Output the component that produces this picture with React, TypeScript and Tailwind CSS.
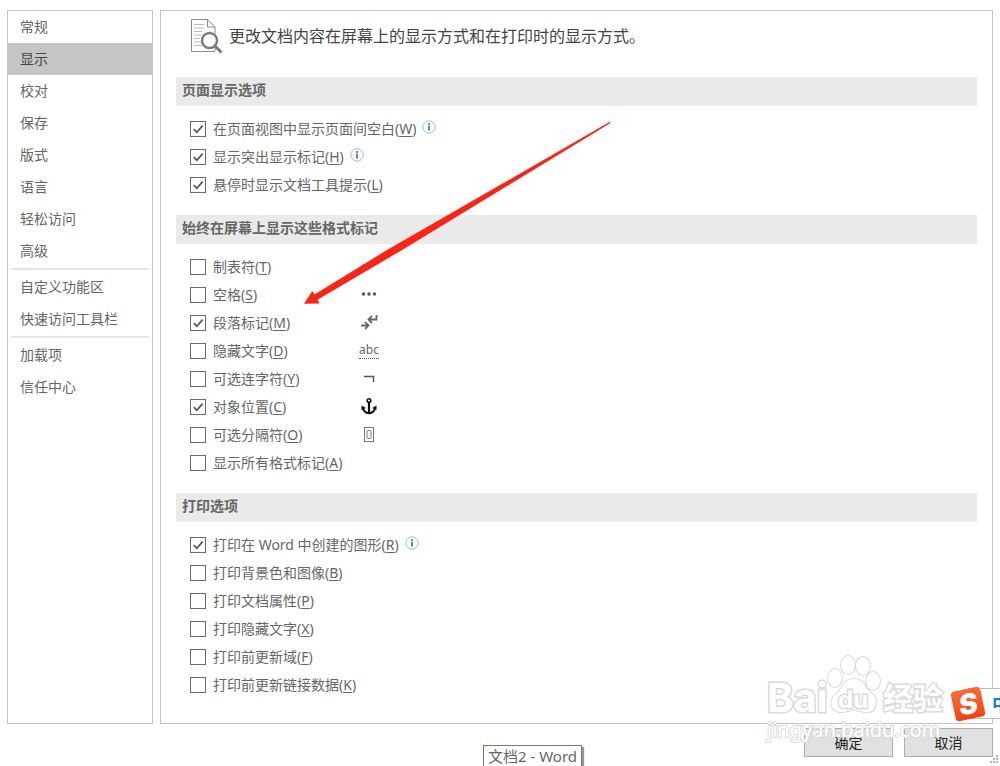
import { useState } from 'react'
import type { ReactNode } from 'react'

interface Option {
  id: string
  label: string
  accel: string
  checked?: boolean
  info?: boolean
  mark?: ReactNode
}

const NAV_GROUPS = [
  ['常规', '显示', '校对', '保存', '版式', '语言', '轻松访问', '高级'],
  ['自定义功能区', '快速访问工具栏'],
  ['加载项', '信任中心'],
]

const PAGE_OPTIONS: Option[] = [
  { id: 'whitespace', label: '在页面视图中显示页面间空白', accel: 'W', checked: true, info: true },
  { id: 'highlight', label: '显示突出显示标记', accel: 'H', checked: true, info: true },
  { id: 'tooltips', label: '悬停时显示文档工具提示', accel: 'L', checked: true },
]

const MARK_OPTIONS: Option[] = [
  { id: 'tabs', label: '制表符', accel: 'T', mark: <TabMark /> },
  { id: 'spaces', label: '空格', accel: 'S', mark: <SpaceMark /> },
  { id: 'paragraph', label: '段落标记', accel: 'M', checked: true, mark: <ParagraphMark /> },
  { id: 'hidden', label: '隐藏文字', accel: 'D', mark: <HiddenMark /> },
  { id: 'hyphens', label: '可选连字符', accel: 'Y', mark: <HyphenMark /> },
  { id: 'anchors', label: '对象位置', accel: 'C', checked: true, mark: <AnchorMark /> },
  { id: 'breaks', label: '可选分隔符', accel: 'O', mark: <BreakMark /> },
  { id: 'all', label: '显示所有格式标记', accel: 'A' },
]

const PRINT_OPTIONS: Option[] = [
  { id: 'drawings', label: '打印在 Word 中创建的图形', accel: 'R', checked: true, info: true },
  { id: 'background', label: '打印背景色和图像', accel: 'B' },
  { id: 'properties', label: '打印文档属性', accel: 'P' },
  { id: 'print-hidden', label: '打印隐藏文字', accel: 'X' },
  { id: 'fields', label: '打印前更新域', accel: 'F' },
  { id: 'linked', label: '打印前更新链接数据', accel: 'K' },
]

export default function App() {
  const [active, setActive] = useState('显示')

  return (
    <div className="relative flex min-h-screen flex-col overflow-hidden bg-white px-[7px] pt-[10px] pb-[9px] font-['Noto_Sans','Noto_Sans_CJK_SC',sans-serif] text-sm text-[#666]">
      <div className="flex flex-1 gap-[7px]">
        <Sidebar active={active} onSelect={setActive} />

        <main className="relative flex-1 border border-[#c3c3c3] px-[15px]">
          <header className="flex h-[66px] items-center gap-[6px] pb-4 pl-[14px]">
            <DocumentSearchIcon />
            <h1 className="text-base text-[#444]">更改文档内容在屏幕上的显示方式和在打印时的显示方式。</h1>
          </header>

          <Section title="页面显示选项" options={PAGE_OPTIONS} />
          <Section title="始终在屏幕上显示这些格式标记" options={MARK_OPTIONS} />
          <Section title="打印选项" options={PRINT_OPTIONS} />

          <PointerArrow />
        </main>
      </div>

      <footer className="mt-1 flex justify-end gap-[11px]">
        <DialogButton>确定</DialogButton>
        <DialogButton>取消</DialogButton>
      </footer>

      <Watermark />
      <InputMethodBar />
      <ResizeGrip />

      <div
        role="tooltip"
        className="absolute bottom-0 left-[483px] h-[21px] border border-b-0 border-[#777] bg-white px-1 text-[15px] leading-5 whitespace-nowrap shadow-[2px_2px_1px_#999]"
      >
        文档2 - Word
      </div>
    </div>
  )
}

function Sidebar({ active, onSelect }: { active: string; onSelect: (name: string) => void }) {
  return (
    <nav className="w-[146px] shrink-0 border border-[#c3c3c3]">
      {NAV_GROUPS.map((group, i) => (
        <div key={group[0]}>
          {i > 0 && <hr className="mx-[3px] my-px border-t-2 border-[#e6e6e6]" />}
          {group.map(name => (
            <button
              key={name}
              onClick={() => onSelect(name)}
              className={`block h-8 w-full px-3 text-left ${
                name === active ? 'bg-[#c5c5c5] text-[#444]' : 'hover:bg-[#e6e6e6]'
              }`}
            >
              {name}
            </button>
          ))}
        </div>
      ))}
    </nav>
  )
}

function Section({ title, options }: { title: string; options: Option[] }) {
  return (
    <section>
      <h2 className="h-[29px] bg-[#eaeaea] px-[6px] leading-[25px] font-bold">{title}</h2>
      <ul className="pt-[9px] pb-4 pl-[14px]">
        {options.map(option => (
          <OptionRow key={option.id} option={option} />
        ))}
      </ul>
    </section>
  )
}

function OptionRow({ option }: { option: Option }) {
  const { id, label, accel, checked, info, mark } = option
  return (
    <li className="flex h-7 items-center">
      <div className="flex min-w-[169px] items-center">
        <span className="relative flex size-4 shrink-0">
          <input
            id={id}
            type="checkbox"
            defaultChecked={checked}
            className="peer size-4 appearance-none border border-[#6a6a6a] bg-white"
          />
          <svg
            viewBox="0 0 16 16"
            className="pointer-events-none absolute inset-0 hidden size-4 peer-checked:block"
            fill="none"
            stroke="#555"
            strokeWidth="1.7"
          >
            <path d="M3.8 8.2 6.8 11.2 12.6 4.6" />
          </svg>
        </span>
        <label htmlFor={id} className="pl-[7px] whitespace-nowrap">
          {label}(<u className="underline-offset-2">{accel}</u>)
        </label>
        {info && <InfoIcon />}
      </div>
      {mark}
    </li>
  )
}

function DialogButton({ children }: { children: ReactNode }) {
  return (
    <button className="h-[29px] w-[89px] border border-[#adadad] bg-[#e1e1e1] text-[#222] hover:bg-[#e5f1fb]">
      {children}
    </button>
  )
}

function InfoIcon() {
  return (
    <svg width="14" height="14" viewBox="0 0 14 14" className="mb-1 ml-[6px] shrink-0" fill="none">
      <circle cx="7" cy="7" r="6.2" stroke="#9db9dd" />
      <circle cx="7" cy="4" r="1" fill="#3468a8" />
      <path d="M7 5.8V10.4" stroke="#3468a8" strokeWidth="1.6" />
    </svg>
  )
}

function DocumentSearchIcon() {
  return (
    <svg width="33" height="36" viewBox="0 0 33 36" fill="none" className="shrink-0">
      <path d="M1.5 1.5H17.5L25 9V33.5H1.5Z" fill="#fff" stroke="#8a8a8a" />
      <path d="M17.5 1.5V9H25" stroke="#8a8a8a" />
      <path d="M4 6.5H14M4 10H14M4 13.5H12M4 17H11M4 20.5H10M4 24H11M4 27.5H13" stroke="#b9b9b9" />
      <circle cx="19.5" cy="22.5" r="9" fill="#fff" />
      <circle cx="19.5" cy="22.5" r="7.5" fill="#fff" stroke="#7c7c7c" strokeWidth="2.4" />
      <path d="M25 28 31.5 34.5" stroke="#7c7c7c" strokeWidth="3" />
    </svg>
  )
}

function TabMark() {
  return (
    <svg width="20" height="16" viewBox="0 0 20 16" fill="none" stroke="#666" strokeWidth="1.5">
      <path d="M4 6H13M10 3 13 6 10 9" />
    </svg>
  )
}

function SpaceMark() {
  return (
    <svg width="20" height="16" viewBox="0 0 20 16" fill="#555">
      <circle cx="4.5" cy="7" r="1.7" />
      <circle cx="10" cy="7" r="1.7" />
      <circle cx="15.5" cy="7" r="1.7" />
    </svg>
  )
}

function ParagraphMark() {
  return (
    <svg width="20" height="18" viewBox="0 0 20 18" fill="none" stroke="#666" strokeWidth="1.8">
      <path d="M17.5 1V5.5H10M13 2 9.5 5.5 13 9" />
      <path d="M2 11.5H9M6 8 9.5 11.5 6 15" />
    </svg>
  )
}

function HiddenMark() {
  return (
    <span className="h-[15px] w-5 border-b border-dotted border-[#555] text-center text-xs leading-3">
      abc
    </span>
  )
}

function HyphenMark() {
  return (
    <svg width="20" height="16" viewBox="0 0 20 16" fill="none" stroke="#555" strokeWidth="1.5">
      <path d="M5 5.5H14.5V11" />
    </svg>
  )
}

function AnchorMark() {
  return (
    <svg width="20" height="20" viewBox="0 0 20 20" fill="none" stroke="#111">
      <circle cx="10" cy="3.5" r="1.8" strokeWidth="1.6" />
      <path d="M10 5.5V16" strokeWidth="2.2" />
      <path d="M3.8 10.5C4.3 14 7 16 10 16.3 13 16 15.7 14 16.2 10.5" strokeWidth="2" />
      <path d="M2.5 13V8.5L7 11ZM17.5 13V8.5L13 11Z" fill="#111" stroke="none" />
    </svg>
  )
}

function BreakMark() {
  return (
    <svg width="20" height="18" viewBox="0 0 20 18" fill="none" stroke="#777">
      <rect x="5.5" y="1.5" width="9" height="14" />
      <rect x="8" y="4.5" width="4" height="8" rx="1" />
    </svg>
  )
}

function PointerArrow() {
  return (
    <svg
      width="308"
      height="184"
      viewBox="303 121 308 184"
      className="pointer-events-none absolute top-[110px] left-[142px]"
    >
      <path
        d="M304 303.8 312.3 291 314.5 294.5 387 250 609.5 122 610.5 123 400 251.2 317.5 299.8 319.5 303.6Z"
        fill="#fb2416"
      />
    </svg>
  )
}

// The letters keep a white face with a soft grey rim
function Watermark() {
  return (
    <div
      aria-hidden="true"
      className="pointer-events-none absolute right-[57px] bottom-6 w-[176px] text-white [-webkit-text-stroke:3px_#dadada] [paint-order:stroke_fill]"
    >
      <div className="relative flex h-[60px] items-end justify-between font-['Inter','Noto_Sans_CJK_SC',sans-serif] leading-[40px] font-bold">
        <span className="text-[40px]">Bai</span>
        <svg
          width="56"
          height="60"
          viewBox="0 0 56 60"
          fill="#fff"
          stroke="#dadada"
          strokeWidth="2"
          className="absolute -top-1 left-[59px]"
        >
          <ellipse cx="9" cy="24" rx="7" ry="9" />
          <ellipse cx="22" cy="11" rx="7" ry="9" />
          <ellipse cx="37" cy="12" rx="7" ry="9" />
          <ellipse cx="47" cy="27" rx="7" ry="9" />
          <path d="M28 25C39 25 38 34 46 40 54 47 50 58 41 58 35 58 33 56 28 56 23 56 20 58 15 58 5 58 2 47 10 40 18 34 17 25 28 25Z" />
        </svg>
        <span className="absolute bottom-0 left-[71px] text-2xl leading-[36px]">du</span>
        <span className="text-[30px]">经验</span>
      </div>
      <div className="text-xl leading-6 [-webkit-text-stroke:2px_#dadada]">jingyan.baidu.com</div>
    </div>
  )
}

function InputMethodBar() {
  return (
    <div className="absolute right-0 bottom-[46px] flex h-[33px] w-[47px] items-center">
      <div className="absolute right-0 h-[31px] w-8 border-y border-[#bdbdbd] bg-white" />
      <div className="relative flex size-[30px] shrink-0 -rotate-12 items-center justify-center rounded bg-linear-to-b from-[#ff6a35] to-[#ef4310] font-['Inter',sans-serif] text-[28px] leading-[30px] font-black text-white italic">
        S
      </div>
      <span className="relative pl-[9px] text-lg font-bold whitespace-nowrap text-[#1e78d0]">中</span>
    </div>
  )
}

function ResizeGrip() {
  return (
    <svg width="10" height="10" viewBox="0 0 10 10" fill="#b5b5b5" className="absolute right-px bottom-px">
      <path d="M7 0h2v2h-2zM7 3h2v2h-2zM7 6h2v2h-2zM4 3h2v2h-2zM4 6h2v2h-2zM1 6h2v2h-2z" />
    </svg>
  )
}
